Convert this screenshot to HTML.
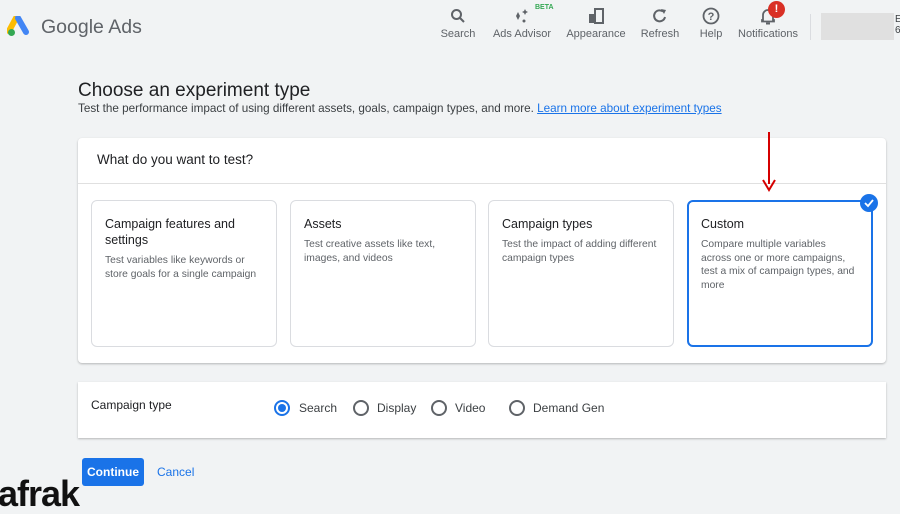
<!DOCTYPE html>
<html><head><style>
*{box-sizing:border-box;margin:0;padding:0}
body{width:900px;height:504px;overflow:hidden;background:#f1f3f4;font-family:"Liberation Sans",sans-serif;color:#3c4043;position:relative}
.abs{position:absolute}
.nav{font-size:11px;color:#5f6368;text-align:center}
.card{position:absolute;top:200px;width:186px;height:147px;border:1px solid #dadce0;border-radius:6px;background:#fff;padding:15px 13px}
.card h3{font-size:12.5px;font-weight:normal;color:#202124;line-height:16px;margin-bottom:6px}
.card p{font-size:10.3px;line-height:13.5px;color:#5f6368}
.radio{position:absolute;top:400px;width:16px;height:16px;border:2px solid #5f6368;border-radius:50%}
.rl{position:absolute;top:401px;font-size:12px;color:#3c4043}
</style></head><body>
<svg class="abs" style="left:7px;top:16px" width="24" height="22" viewBox="0 0 24 22">
<path d="M9 2 L2 15" stroke="#fbbc04" stroke-width="6" stroke-linecap="round"/>
<path d="M11 2 L19 16" stroke="#4285f4" stroke-width="6" stroke-linecap="round"/>
<circle cx="4.5" cy="16.5" r="3.5" fill="#34a853"/></svg>
<div class="abs" style="left:41px;top:16px;font-size:19.5px;color:#5f6368">Google Ads</div>

<svg class="abs" style="left:450px;top:8px" width="16" height="16" viewBox="0 0 16 16"><circle cx="6.5" cy="6.5" r="4.5" stroke="#5f6368" stroke-width="2" fill="none"/><path d="M10 10 L14 14" stroke="#5f6368" stroke-width="2"/></svg>
<div class="abs nav" style="left:440px;top:28px;width:36px">Search</div>
<svg class="abs" style="left:512px;top:7px" width="20" height="18" viewBox="0 0 20 18"><path d="M6 5 L8 9 L6 13 L4 9Z" fill="#5f6368"/><path d="M13 2 l1 2 l2 1 l-2 1 l-1 2 l-1-2 l-2-1 l2-1z" fill="#5f6368"/><circle cx="12" cy="14" r="1.5" fill="#5f6368"/></svg>
<div class="abs" style="left:535px;top:4px;font-size:7px;color:#34a853;font-weight:bold">BETA</div>
<div class="abs nav" style="left:490px;top:28px;width:64px">Ads Advisor</div>
<svg class="abs" style="left:588px;top:8px" width="16" height="16" viewBox="0 0 16 16"><rect x="1" y="6" width="6" height="9" fill="#5f6368"/><rect x="7" y="1" width="8" height="14" fill="none" stroke="#5f6368" stroke-width="2"/></svg>
<div class="abs nav" style="left:565px;top:28px;width:62px">Appearance</div>
<svg class="abs" style="left:652px;top:8px" width="16" height="16" viewBox="0 0 16 16"><path d="M13 9 A5.5 5.5 0 1 1 11 3.5" stroke="#5f6368" stroke-width="2" fill="none"/><path d="M9 1 L14 2 L12 6Z" fill="#5f6368"/></svg>
<div class="abs nav" style="left:640px;top:28px;width:40px">Refresh</div>
<svg class="abs" style="left:702px;top:7px" width="18" height="18" viewBox="0 0 18 18"><circle cx="9" cy="9" r="7.5" stroke="#5f6368" stroke-width="1.8" fill="none"/><text x="9" y="13" font-size="11" text-anchor="middle" fill="#5f6368" font-family="Liberation Sans" font-weight="bold">?</text></svg>
<div class="abs nav" style="left:696px;top:28px;width:30px">Help</div>
<svg class="abs" style="left:760px;top:8px" width="16" height="17" viewBox="0 0 16 17"><path d="M3 12 V7 A5 5 0 0 1 13 7 V12 H14 V13.5 H2 V12Z" fill="none" stroke="#5f6368" stroke-width="1.8"/><rect x="6" y="14.5" width="4" height="2" fill="#5f6368"/></svg>
<div class="abs" style="left:768px;top:1px;width:17px;height:17px;border-radius:50%;background:#d93025;color:#fff;font-size:11px;font-weight:bold;text-align:center;line-height:17px">!</div>
<div class="abs nav" style="left:736px;top:28px;width:64px">Notifications</div>
<div class="abs" style="left:810px;top:14px;width:1px;height:26px;background:#dadce0"></div>
<div class="abs" style="left:821px;top:13px;width:73px;height:27px;background:#e0e0e0"></div>
<div class="abs" style="left:895px;top:14px;font-size:10px;color:#3c4043">E<br>6</div>

<div class="abs" style="left:78px;top:80px;font-size:19px;color:#202124">Choose an experiment type</div>
<div class="abs" style="left:78px;top:102px;font-size:11.7px;color:#3c4043">Test the performance impact of using different assets, goals, campaign types, and more. <span style="color:#1a73e8;text-decoration:underline">Learn more about experiment types</span></div>

<div class="abs" style="left:78px;top:138px;width:808px;height:225px;background:#fff;border-radius:4px;box-shadow:0 1px 2px rgba(0,0,0,.25)"></div>
<div class="abs" style="left:97px;top:152px;font-size:13.5px;color:#202124">What do you want to test?</div>
<div class="abs" style="left:78px;top:183px;width:808px;height:1px;background:#e0e0e0"></div>

<div class="card" style="left:91px"><h3>Campaign features and settings</h3><p>Test variables like keywords or store goals for a single campaign</p></div>
<div class="card" style="left:290px"><h3>Assets</h3><p>Test creative assets like text, images, and videos</p></div>
<div class="card" style="left:488px"><h3>Campaign types</h3><p>Test the impact of adding different campaign types</p></div>
<div class="card" style="left:687px;border:2px solid #1a73e8;padding:14px 12px"><h3>Custom</h3><p style="white-space:nowrap">Compare multiple variables<br>across one or more campaigns,<br>test a mix of campaign types, and<br>more</p></div>
<div class="abs" style="left:860px;top:194px;width:18px;height:18px;border-radius:50%;background:#1a73e8"></div>
<svg class="abs" style="left:863px;top:197px" width="12" height="12" viewBox="0 0 12 12"><path d="M2 6 L5 9 L10 3" stroke="#fff" stroke-width="1.8" fill="none"/></svg>
<svg class="abs" style="left:762px;top:132px" width="14" height="60" viewBox="0 0 14 60"><path d="M7 0 V52" stroke="#d50000" stroke-width="2"/><path d="M1 48 L7 58 L13 48" stroke="#d50000" stroke-width="2" fill="none"/></svg>

<div class="abs" style="left:78px;top:382px;width:808px;height:56px;background:#fff;box-shadow:0 1px 2px rgba(0,0,0,.25)"></div>
<div class="abs" style="left:91px;top:398px;font-size:12px;color:#202124">Campaign type</div>
<div class="radio" style="left:274px;border-color:#1a73e8"><div style="margin:2px;width:8px;height:8px;border-radius:50%;background:#1a73e8"></div></div>
<div class="rl" style="left:299px">Search</div>
<div class="radio" style="left:353px"></div><div class="rl" style="left:377px">Display</div>
<div class="radio" style="left:431px"></div><div class="rl" style="left:455px">Video</div>
<div class="radio" style="left:509px"></div><div class="rl" style="left:533px">Demand Gen</div>

<div class="abs" style="left:82px;top:458px;width:62px;height:28px;background:#1a73e8;border-radius:3px;color:#fff;font-size:12px;font-weight:bold;text-align:center;line-height:28px">Continue</div>
<div class="abs" style="left:157px;top:465px;font-size:12px;color:#1a73e8">Cancel</div>
<div class="abs" style="left:-2px;top:474px;font-size:36px;font-weight:bold;color:#111;letter-spacing:-1px;line-height:40px">afrak</div>
</body></html>
